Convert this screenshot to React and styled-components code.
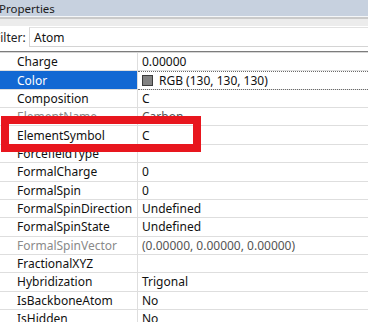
import React from "react";
import styled, { createGlobalStyle } from "styled-components";

const GlobalStyle = createGlobalStyle`
  html, body { margin: 0; padding: 0; background: #ffffff; overflow: hidden; }
  body { font-family: "Noto Sans", "Open Sans", sans-serif; }
`;

const Panel = styled.div`
  width: 368px;
  height: 322px;
  display: flex;
  flex-direction: column;
  overflow: hidden;
  background: #ffffff;
  color: #111;
  font-size: 12px;
`;

const TitleBar = styled.div`
  height: 16px;
  flex: none;
  background: #c7d1df;
  display: flex;
  align-items: center;
  font-size: 11.5px;
  color: #1b1b1b;
  border-bottom: 1px solid #f4f6f8;
`;

const TitleText = styled.span`
  margin-left: -1px;
`;

const TitleRule = styled.div`
  flex: none;
  height: 7px;
  background: #ececec;
  border-top: 2px solid #cacaca;
`;

const FilterBar = styled.div`
  flex: none;
  display: flex;
  align-items: stretch;
  height: 20px;
  margin-top: 1px;
`;

const FilterLabel = styled.span`
  width: 35px;
  margin-left: -6px;
  display: flex;
  align-items: center;
  font-size: 12px;
  color: #222;
`;

const FilterInput = styled.div`
  flex: 1;
  display: flex;
  align-items: center;
  padding-left: 4px;
  border-top: 1px solid #e2e2e2;
  border-left: 1px solid #d8d8d8;
  border-bottom: 1px solid #d4d4d4;
  font-size: 12px;
  color: #111;
`;

const Gap = styled.div`
  flex: none;
  height: 4px;
`;

const Grid = styled.div`
  position: relative;
  flex: none;
  border-top: 1px solid #7c7c7c;
  box-shadow: inset 0 1px 0 #d6d6d6;
  padding-top: 1px;
`;

const Row = styled.div`
  display: grid;
  grid-template-columns: 138px 1fr;
  height: 18.36px;
  box-sizing: border-box;
  border-bottom: 1px solid #dedede;
`;

const NameCell = styled.div`
  display: flex;
  align-items: center;
  padding-left: 17px;
  white-space: nowrap;
  overflow: hidden;
  border-right: 1px solid #dedede;
  background: ${(p) => (p.$selected ? "#1268d3" : "transparent")};
  color: ${(p) => (p.$selected ? "#ffffff" : p.$readOnly ? "#8a8a8a" : "#111111")};
`;

const ValueCell = styled.div`
  display: flex;
  align-items: center;
  gap: 6px;
  padding-left: 4px;
  white-space: nowrap;
  overflow: hidden;
  color: ${(p) => (p.$readOnly ? "#555555" : "#111111")};
  border-top: ${(p) => (p.$focused ? "1px dotted #6a6a6a" : "none")};
  border-bottom: ${(p) => (p.$focused ? "1px dotted #6a6a6a" : "none")};
  margin-bottom: ${(p) => (p.$focused ? "-1px" : "0")};
`;

const Swatch = styled.span`
  width: 9px;
  height: 9px;
  background: #828282;
  border: 1px solid #3c3c3c;
  flex: none;
`;

const Highlight = styled.div`
  position: absolute;
  left: 1px;
  top: 64px;
  width: 200px;
  height: 36px;
  box-sizing: border-box;
  border: 8px solid #e8161e;
  pointer-events: none;
`;

const rows = [
  { name: "Charge", value: "0.00000" },
  { name: "Color", value: "RGB (130, 130, 130)", selected: true, swatch: true },
  { name: "Composition", value: "C" },
  { name: "ElementName", value: "Carbon", readOnly: true },
  { name: "ElementSymbol", value: "C" },
  { name: "ForcefieldType", value: "" },
  { name: "FormalCharge", value: "0" },
  { name: "FormalSpin", value: "0" },
  { name: "FormalSpinDirection", value: "Undefined" },
  { name: "FormalSpinState", value: "Undefined" },
  { name: "FormalSpinVector", value: "(0.00000, 0.00000, 0.00000)", readOnly: true },
  { name: "FractionalXYZ", value: "" },
  { name: "Hybridization", value: "Trigonal" },
  { name: "IsBackboneAtom", value: "No" },
  { name: "IsHidden", value: "No" },
];

export default function App() {
  return (
    <>
      <GlobalStyle />
      <Panel>
        <TitleBar>
          <TitleText>Properties</TitleText>
        </TitleBar>
        <TitleRule />
        <FilterBar>
          <FilterLabel>Filter:</FilterLabel>
          <FilterInput>Atom</FilterInput>
        </FilterBar>
        <Gap />
        <Grid>
          {rows.map((r) => (
            <Row key={r.name}>
              <NameCell $selected={r.selected} $readOnly={r.readOnly}>
                {r.name}
              </NameCell>
              <ValueCell $focused={r.selected} $readOnly={r.readOnly}>
                {r.swatch && <Swatch />}
                {r.value}
              </ValueCell>
            </Row>
          ))}
          <Highlight />
        </Grid>
      </Panel>
    </>
  );
}
